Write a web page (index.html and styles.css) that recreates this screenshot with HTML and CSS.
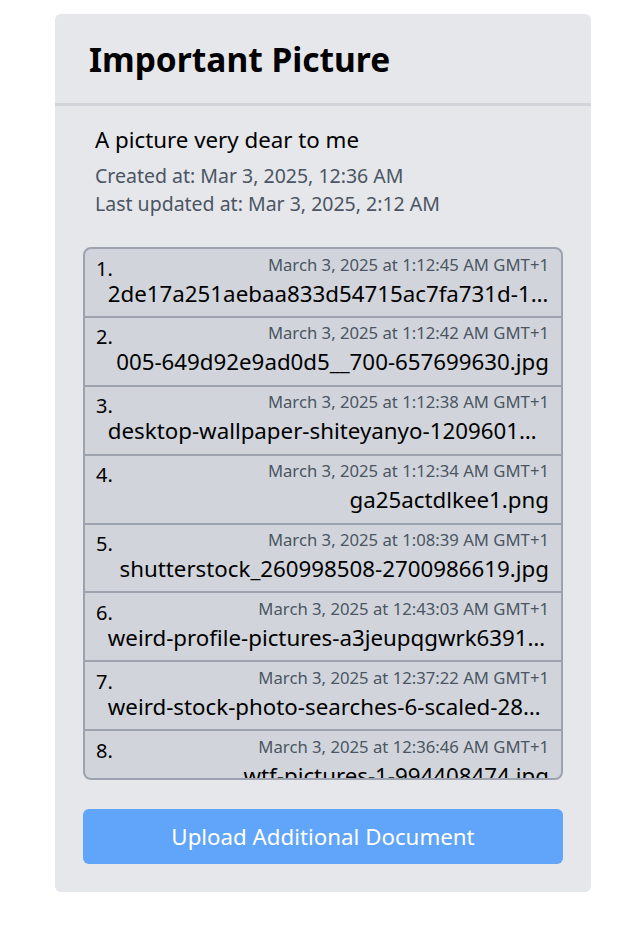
FILE: index.html
```html
<!DOCTYPE html>
<html lang="en">
<head>
<meta charset="utf-8">
<title>Important Picture</title>
<link rel="stylesheet" href="styles.css">
</head>
<body>
<div class="page">
  <div class="card">
    <div class="card-header">
      <h1 class="title">Important Picture</h1>
    </div>
    <div class="card-body">
      <div class="info">
        <p class="desc">A picture very dear to me</p>
        <p class="meta">Created at: Mar 3, 2025, 12:36 AM</p>
        <p class="meta">Last updated at: Mar 3, 2025, 2:12 AM</p>
      </div>
      <ol class="files">
        <li class="file"><span class="num">1.</span><span class="stamp">March 3, 2025 at 1:12:45 AM GMT+1</span><span class="name">2de17a251aebaa833d54715ac7fa731d-1740958364.jpg</span></li>
        <li class="file"><span class="num">2.</span><span class="stamp">March 3, 2025 at 1:12:42 AM GMT+1</span><span class="name">005-649d92e9ad0d5__700-657699630.jpg</span></li>
        <li class="file"><span class="num">3.</span><span class="stamp">March 3, 2025 at 1:12:38 AM GMT+1</span><span class="name">desktop-wallpaper-shiteyanyo-1209601234.jpg</span></li>
        <li class="file"><span class="num">4.</span><span class="stamp">March 3, 2025 at 1:12:34 AM GMT+1</span><span class="name">ga25actdlkee1.png</span></li>
        <li class="file"><span class="num">5.</span><span class="stamp">March 3, 2025 at 1:08:39 AM GMT+1</span><span class="name">shutterstock_260998508-2700986619.jpg</span></li>
        <li class="file"><span class="num">6.</span><span class="stamp">March 3, 2025 at 12:43:03 AM GMT+1</span><span class="name">weird-profile-pictures-a3jeupqgwrk63912345.jpg</span></li>
        <li class="file"><span class="num">7.</span><span class="stamp">March 3, 2025 at 12:37:22 AM GMT+1</span><span class="name">weird-stock-photo-searches-6-scaled-2812345.jpg</span></li>
        <li class="file"><span class="num">8.</span><span class="stamp">March 3, 2025 at 12:36:46 AM GMT+1</span><span class="name">wtf-pictures-1-994408474.jpg</span></li>
      </ol>
      <button class="upload" type="button">Upload Additional Document</button>
    </div>
  </div>
</div>
</body>
</html>
```

FILE: styles.css
```css
* { box-sizing: border-box; }
html, body { margin: 0; padding: 0; background: #ffffff; }
body { font-family: "Noto Sans", "Open Sans", sans-serif; color: #000; }

.page {
  padding: 14px 31px 0 55px;
}

.card {
  width: 536px;
  background: #e5e7eb;
  border-radius: 6px;
  overflow: hidden;
}

.card-header {
  padding: 24px 34px 23px;
  border-bottom: 3px solid #d1d5db;
}

.title {
  margin: 0;
  font-size: 33.5px;
  font-weight: 700;
  line-height: 42px;
}

.card-body {
  padding: 19px 28px 28px;
}

.info {
  padding: 0 12px;
}

.desc {
  margin: 0 0 7px;
  font-size: 22.3px;
  line-height: 30px;
}

.meta {
  margin: 0;
  font-size: 19.5px;
  line-height: 28px;
  color: #4b5563;
}

.files {
  list-style: none;
  margin: 29px 0 0;
  padding: 0;
  height: 533px;
  overflow: hidden;
  border: 2px solid #9ca3af;
  border-radius: 8px;
  background: #d1d5db;
}

.file {
  display: grid;
  grid-template-columns: auto 1fr;
  grid-template-rows: 24px 33px;
  height: 68.9px;
  padding: 3.5px 12px 0 11px;
  border-bottom: 2px solid #9ca3af;
}

.num {
  grid-column: 1;
  grid-row: 1;
  font-size: 20px;
  line-height: 24px;
  margin-top: 4px;
  margin-bottom: -4px;
  white-space: nowrap;
}

.stamp {
  grid-column: 2;
  grid-row: 1;
  text-align: right;
  font-size: 16.7px;
  line-height: 24px;
  color: #4b5563;
  white-space: nowrap;
}

.name {
  grid-column: 1 / -1;
  grid-row: 2;
  min-width: 0;
  padding-left: 11.8px;
  text-align: right;
  font-size: 22.3px;
  line-height: 33px;
  white-space: nowrap;
  overflow: hidden;
  text-overflow: ellipsis;
}

.upload {
  display: block;
  width: 100%;
  margin-top: 29px;
  height: 55px;
  border: none;
  border-radius: 6px;
  background: #60a5fa;
  color: #ffffff;
  font-family: "Noto Sans", "Open Sans", sans-serif;
  font-size: 22.3px;
}
```
